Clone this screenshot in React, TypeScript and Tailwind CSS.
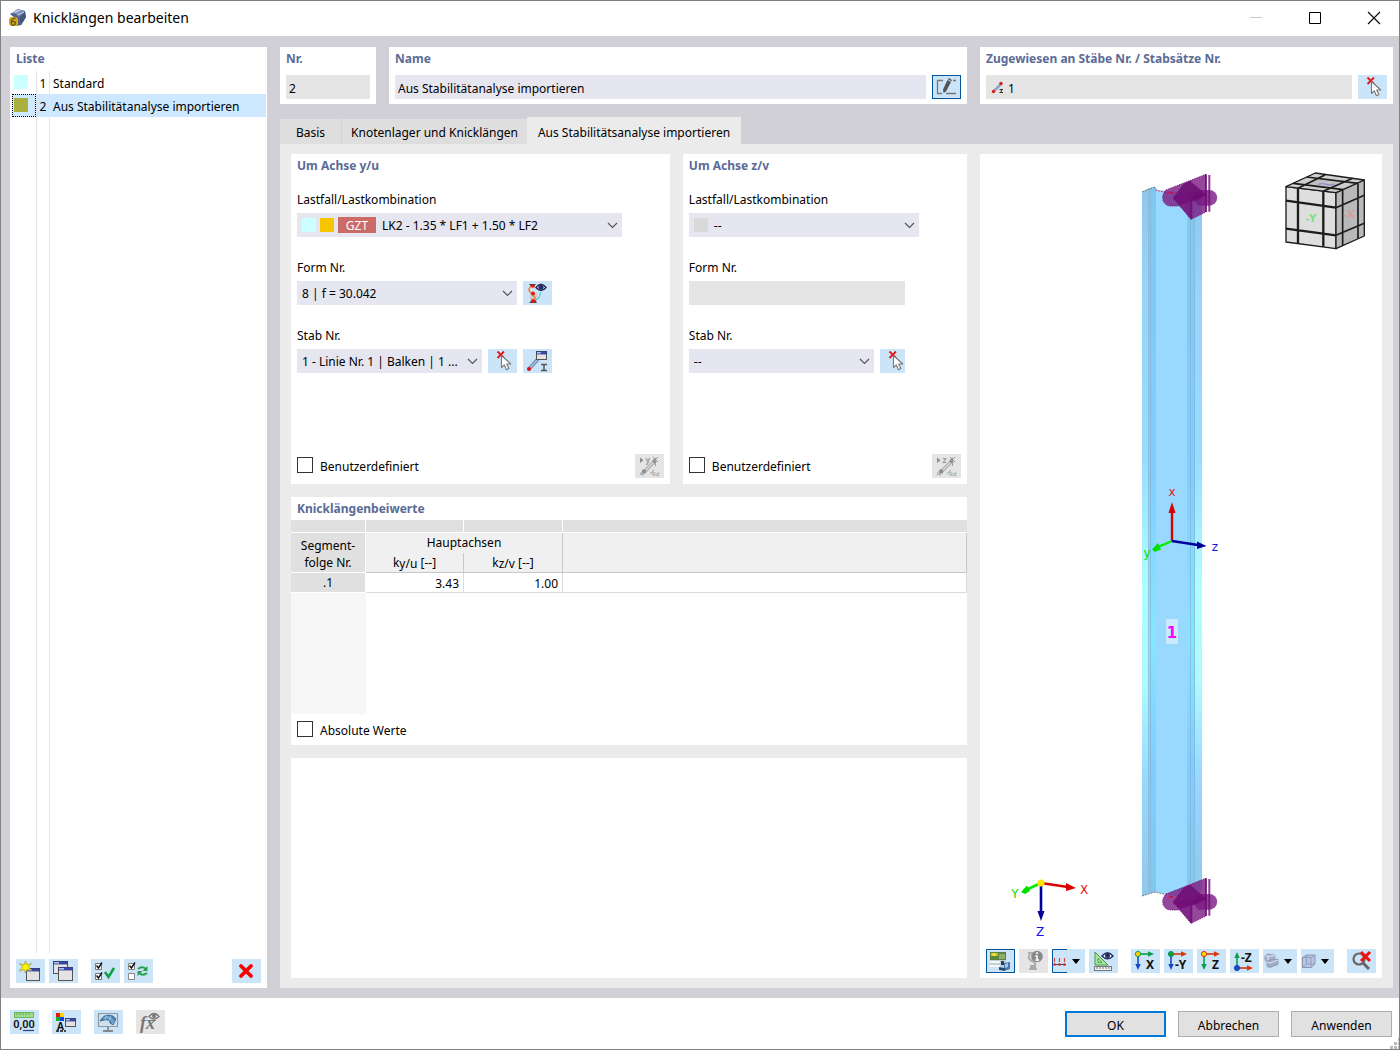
import type { ReactNode } from "react";

const HEADING = "text-[12px] leading-4 font-bold text-[#5a6b96]";

function Icon({ children, w = 29 }: { children: ReactNode; w?: number }) {
  return (
    <svg width={w} height={24} viewBox={`0 0 ${w} 24`} aria-hidden="true" className="block shrink-0">
      {children}
    </svg>
  );
}

function IconButton({
  label,
  children,
  className = "w-[29px] bg-[#cce4f7]",
  disabled = false,
}: {
  label: string;
  children: ReactNode;
  className?: string;
  disabled?: boolean;
}) {
  return (
    <button
      type="button"
      aria-label={label}
      title={label}
      disabled={disabled}
      className={`flex h-6 shrink-0 items-center justify-start overflow-hidden ${className}`}
    >
      {children}
    </button>
  );
}

const DISABLED_BTN = "w-[29px] bg-[#e5e5e5]";
const ACTIVE_BTN = "w-[29px] bg-[#cce4f7] outline outline-1 -outline-offset-1 outline-[#005499]";

function MiniWindow({ x, y, w, h }: { x: number; y: number; w: number; h: number }) {
  return (
    <g>
      <rect x={x + 0.5} y={y + 0.5} width={w - 1} height={h - 1} fill="#e3e3e6" stroke="#555" />
      <rect x={x + 0.5} y={y + 0.5} width={w - 1} height={2.5} fill="#3949b8" stroke="#34406f" strokeWidth="0.8" />
      <rect x={x + 1} y={y + 1} width={w / 3} height={1.6} fill="#a9c2ee" />
    </g>
  );
}

function PickIcon() {
  return (
    <Icon>
      <path d="M9.500 2.500l6.500 6.500M16 2.500L9.500 9" stroke="#e3161b" strokeWidth="1.800" />
      <path
        d="M13.500 6.500v12l2.800-2.600 2.200 4.800 2.400-1.100-2.200-4.600h4z"
        fill="#fff"
        stroke="#777"
        strokeWidth="1.100"
        strokeLinejoin="round"
      />
    </Icon>
  );
}

function MemberImportIcon({ axis }: { axis: string }) {
  return (
    <Icon>
      <path d="M5 3.500v5.500l3.500-2.800z" fill="#8d8d8d" />
      <text x="10.500" y="9" fontSize="8" fontWeight="bold" fill="#999">{axis}</text>
      <path d="M9 18L20 7" stroke="#a9a9a9" strokeWidth="3.500" />
      <path d="M9 18L20 7" stroke="#d9d9d9" strokeWidth="1.500" />
      <circle cx="9" cy="17.500" r="2.200" fill="#8d8d8d" />
      <circle cx="19.500" cy="7" r="2" fill="#8d8d8d" />
      <path d="M5 21.500l4-4M5 18.500l4 3M18 3l5 5M23 3l-4 4M15 20l4-4M20.500 4v8" stroke="#999" strokeWidth="1" />
      <text x="17" y="22" fontSize="6" fill="#999">Rd</text>
    </Icon>
  );
}

type Dir = { v: string; h: string; o: string; t: string; up?: boolean };

function AxisIcon({ v, h, o, t, up }: Dir) {
  const y = up ? 19 : 5;
  return (
    <Icon>
      <path d={`M7 ${y}H18`} stroke={h} strokeWidth="1.600" />
      <path d={`M17 ${y - 2.7}L23 ${y}L17 ${y + 2.7}z`} fill={h} />
      <path d={up ? "M7 19V8" : "M7 5V16"} stroke={v} strokeWidth="1.600" />
      <path d={up ? "M4.300 9L7 3L9.700 9z" : "M4.300 15L7 21L9.700 15z"} fill={v} />
      <circle cx="7" cy={y} r="2.600" fill={o} stroke={o === "#ffd400" ? h : o} strokeWidth="1" />
      <text x={t.length > 1 ? 11 : 15} y={up ? 13 : 20} fontSize="12" fontWeight="bold" fill="#111">
        {t}
      </text>
    </Icon>
  );
}

function Select({
  id,
  value,
  className,
  children,
}: {
  id: string;
  value: string;
  className: string;
  children?: ReactNode;
}) {
  const pads: Record<string, string> = { lf1: "pl-[85px]", lf2: "pl-[25px]" };
  return (
    <div className={`relative h-6 ${className}`}>
      <select
        id={id}
        className={`h-6 w-full appearance-none truncate bg-[#e6e6f1] pt-0.5 pr-5 text-[12px] text-black outline-none ${pads[id] ?? "pl-[5px]"}`}
      >
        <option>{value}</option>
      </select>
      {children}
      <svg width="11" height="7" viewBox="0 0 11 7" className="pointer-events-none absolute top-[9px] right-1" aria-hidden="true">
        <path d="M1 1l4.500 4.500L10 1" fill="none" stroke="#555" strokeWidth="1.200" />
      </svg>
    </div>
  );
}

function Field({ id, label, children }: { id: string; label: string; children: ReactNode }) {
  return (
    <div className="flex flex-col gap-[5px]">
      <label htmlFor={id} className="self-start leading-4">
        {label}
      </label>
      <div className="flex gap-1.5">{children}</div>
    </div>
  );
}

function Check({ label }: { label: string }) {
  return (
    <label className="flex items-start gap-[7px] leading-[19px]">
      <input type="checkbox" className="h-4 w-4 appearance-none border border-[#333] bg-white checked:bg-[#333]" />
      {label}
    </label>
  );
}

function ListRow({ color, nr, text, selected }: { color: string; nr: string; text: string; selected?: boolean }) {
  return (
    <li className="flex h-[23px]">
      <span
        className={`flex w-6 items-start border pt-[3px] pl-px ${selected ? "border-dotted border-black bg-[#cde8ff]" : "border-transparent"}`}
      >
        <span className={`h-3.5 w-3.5 ${color}`} />
      </span>
      <button type="button" className={`flex flex-1 items-stretch text-left ${selected ? "bg-[#cde8ff]" : ""}`}>
        <span className="flex w-3.5 items-center justify-center border-x border-[#e5e5e5] pt-0.5">{nr}</span>
        <span className="flex items-center pt-0.5 pl-[3px]">{text}</span>
      </button>
    </li>
  );
}

function Support() {
  return (
    <g>
      <path
        d="M108 90L228 43V156L183 178L150 138H122A24 24 0 0 1 98 115Q98 100 108 90z"
        fill="#7a1a82"
        fillOpacity=".8"
        stroke="#7a1a82"
        strokeWidth="3"
        strokeDasharray="4 3"
      />
      <path d="M205 90H238A23 23 0 0 1 238 137H205L185 112z" fill="#7a1a82" fillOpacity=".8" />
      <path d="M128 115L160 72L180 62L230 105L200 120L150 135z" fill="#6a0a70" fillOpacity=".8" />
      <path d="M128 115L183 178V100z" fill="#740f7a" fillOpacity=".6" />
      <path d="M184 110V178M228 43V156M238 45V155" stroke="#6d0d74" strokeWidth="6" strokeOpacity=".8" />
      <path d="M116 97l14 2" stroke="#d01040" strokeWidth="5" />
    </g>
  );
}

function Scene() {
  return (
    <svg
      viewBox="980 154 402 795"
      className="min-h-0 w-full flex-1"
      role="img"
      aria-label="Stab 1"
      preserveAspectRatio="xMidYMid meet"
    >
      <defs>
        <linearGradient id="flange" x1="0" y1="0" x2="0" y2="1">
          <stop offset="0" stopColor="#8fc8ec" />
          <stop offset=".15" stopColor="#98d4fc" />
          <stop offset=".38" stopColor="#99dbff" />
          <stop offset=".56" stopColor="#adfdff" />
          <stop offset=".7" stopColor="#adfaff" />
          <stop offset=".84" stopColor="#99d7ff" />
          <stop offset="1" stopColor="#8fc8ec" />
        </linearGradient>
        <linearGradient id="inner" x1="0" y1="0" x2="0" y2="1">
          <stop offset="0" stopColor="#80c8ee" />
          <stop offset=".4" stopColor="#80cdff" />
          <stop offset=".64" stopColor="#86e6ff" />
          <stop offset=".82" stopColor="#80cdff" />
          <stop offset="1" stopColor="#80c8ee" />
        </linearGradient>
      </defs>
      <path d="M1142 192L1155 187L1158 190L1202 194V892L1180 897L1155 892L1142 896z" fill="#99d9ff" />
      <path d="M1142 192L1149 188V893L1142 896z" fill="url(#flange)" />
      <path d="M1149 188L1156 187V892L1149 893z" fill="url(#inner)" />
      <path d="M1187 192H1195V890H1187z" fill="url(#inner)" />
      <path d="M1195 192H1202V890H1195z" fill="url(#flange)" />
      <path d="M1148.500 190V893M1150.500 189V893M1190.500 192V890M1194.500 192V890" stroke="#84b5d6" strokeWidth="1" strokeOpacity=".7" />
      <path d="M1142 192L1155 187M1142 896L1155 892L1168 895" stroke="#777" strokeWidth="1" strokeDasharray="2 1" fill="none" />
      <path d="M1155 190L1168 193" stroke="#e04050" strokeWidth="1" strokeDasharray="2 1" />
      <g transform="translate(1130 160) scale(.3333)">
        <Support />
      </g>
      <g transform="translate(1130 864) scale(.3333)">
        <Support />
      </g>

      <g strokeWidth="2.400">
        <path d="M1172 541V512" stroke="#d80000" />
        <path d="M1168.500 513L1172 502L1175.500 513z" fill="#d80000" />
        <path d="M1172 541L1158 547" stroke="#00ee00" />
        <path d="M1152 549.500L1158 543L1161 549.500L1155 552z" fill="#00e000" />
        <path d="M1172 541L1198 545" stroke="#00009b" />
        <path d="M1197 541.500L1206.500 546L1197 549z" fill="#00009b" />
      </g>
      <g fontSize="12" textAnchor="middle" fontFamily="DejaVu Sans">
        <text x="1172" y="496" fill="#e02020">x</text>
        <text x="1147" y="557" fill="#00e000">y</text>
        <text x="1215" y="551" fill="#1010e0">z</text>
      </g>
      <rect x="1166" y="619" width="12" height="25" fill="#c9e9fc" />
      <text x="1172" y="638" fontSize="15" fontWeight="bold" fill="#f0f" textAnchor="middle" fontFamily="DejaVu Sans">1</text>

      <g strokeWidth="2.600">
        <path d="M1041 883L1068 887" stroke="#d80000" />
        <path d="M1066 883L1076 888L1066 891z" fill="#d80000" />
        <path d="M1041 883L1028 889" stroke="#00ee00" />
        <path d="M1021 892L1027 885.500L1030 891L1025 894z" fill="#00e000" />
        <path d="M1041 883V912" stroke="#00009b" />
        <path d="M1037.500 911L1041 921L1044.500 911z" fill="#00009b" />
        <circle cx="1041" cy="883" r="3.600" fill="#ffe600" />
      </g>
      <g fontSize="12" textAnchor="middle" fontFamily="DejaVu Sans">
        <text x="1084" y="894" fill="#e81010">X</text>
        <text x="1015" y="898" fill="#00e000">Y</text>
        <text x="1040" y="936" fill="#1010e8">Z</text>
      </g>

      <g transform="translate(1130 160) scale(.3333)" stroke="#1c1c1c" strokeWidth="4" strokeLinejoin="round">
        <path d="M468 80L618 98V266L468 246z" fill="#dedede" />
        <path d="M618 98L703 60V228L618 266z" fill="#b9b9b9" />
        <path d="M468 80L556 39L703 60L618 98z" fill="#cfcfcf" />
        <path d="M530 73L568 54L650 64L602 84z" fill="#bfbfc4" stroke="none" />
        <g fill="none" strokeWidth="7">
          <path d="M504 85V250M580 94V260M468 122L618 143M468 206L618 226" />
          <path d="M638 90V258M684 70V236M618 143L703 106M618 226L703 190" strokeWidth="5" />
          <path d="M504 85L586 44M580 94L668 55M490 70L640 89M530 51L684 70" strokeWidth="5" />
        </g>
        <path d="M565 73q14-4 24 0t24-1" fill="none" stroke="#8e8ecb" strokeWidth="4" />
      </g>
      <g fontSize="11" fontWeight="bold" textAnchor="middle" fontFamily="Noto Sans">
        <text x="1311" y="222" fill="#80dd80">-Y</text>
        <text x="1349" y="218" fill="#d99a9a">-X</text>
      </g>
    </svg>
  );
}

function Triangle({ x }: { x: number }) {
  return <path d={`M${x} 10h8l-4 5z`} fill="#000" />;
}

function ViewerToolbar() {
  return (
    <div className="flex gap-1 px-1.5 pb-[5px]">
      <IconButton label="Ansicht" className={ACTIVE_BTN}>
        <Icon>
          <rect x="4" y="3" width="16" height="15" fill="#c3d0d8" />
          <rect x="4" y="3" width="16" height="8" fill="#5c8440" />
          <path d="M13 5h6v5h-6z" fill="#8fb06a" />
          <rect x="5" y="4" width="7" height="3" fill="#b8c92e" />
          <circle cx="8" cy="5.500" r="1.800" fill="#f5e034" />
          <path d="M4 12h10v2H4zM4 16h10v2H4z" fill="#f4f6f7" />
          <path d="M15 12h3v4h-3z" fill="#2d4256" />
          <path d="M18 14l6-1v7l-6 2z" fill="#4776ac" />
          <path d="M19 15l3-1v4l-3 1z" fill="#a6c4e4" />
          <path d="M13 18l6 1v3l-6-1z" fill="#27486f" />
        </Icon>
      </IconButton>
      <IconButton label="Information" className={DISABLED_BTN} disabled>
        <Icon>
          <path d="M9 4h8v3l-3 2M11 5q-3 5 2 7t2 6M10 20h8" fill="none" stroke="#b0b0b0" strokeWidth="2.200" />
          <rect x="11" y="16" width="6" height="5" fill="#aaa" />
          <circle cx="18" cy="7.500" r="5.800" fill="#8a8a8a" />
          <path d="M18 6.500v5M16.500 7h1.500M16.500 11h3.500" stroke="#eee" strokeWidth="1.800" />
          <circle cx="18" cy="4.200" r="1.100" fill="#eee" />
        </Icon>
      </IconButton>
      <IconButton label="Nummerierung" className="w-[33px] bg-[#cce4f7]">
        <Icon w={33}>
          <path d="M15 .500H.500v23H15" fill="none" stroke="#005499" />
          <path d="M2 15.500h12" stroke="#446" />
          <path d="M2.500 9v4M7.500 9v4M12.500 9v4" stroke="#e24040" strokeWidth="1.200" />
          <path d="M1.500 15.500h2M6.500 15.500h2M11.500 15.500h2" stroke="#e02020" strokeWidth="2.500" />
          <Triangle x={20} />
        </Icon>
      </IconButton>
      <IconButton label="Maße anzeigen">
        <Icon>
          <path d="M6 3v13h13z" fill="#a8e4a0" stroke="#4a9a4a" />
          <path d="M9 9.500v3.800h4z" fill="#e5f6e5" stroke="#4a9a4a" />
          <rect x="5.500" y="17.500" width="17" height="4" fill="#f3f3f3" stroke="#777" />
          <path d="M8 18v2M11 18v2M14 18v2M17 18v2M20 18v2" stroke="#777" />
          <path d="M13 7q5.500-6.500 11 0q-5.500 5.500-11 0z" fill="#fff" stroke="#222d66" strokeWidth="1.500" />
          <circle cx="18.500" cy="6.500" r="2.500" fill="#222d66" />
        </Icon>
      </IconButton>
      <IconButton label="Ansicht X" className="ml-[9px] w-[29px] bg-[#cce4f7]">
        <AxisIcon v="#1748c8" h="#0e9c4a" o="#ffd400" t="X" />
      </IconButton>
      <IconButton label="Ansicht -Y">
        <AxisIcon v="#1748c8" h="#d8380c" o="#0e9c4a" t="-Y" />
      </IconButton>
      <IconButton label="Ansicht Z">
        <AxisIcon v="#0e9c4a" h="#d8380c" o="#ffd400" t="Z" />
      </IconButton>
      <IconButton label="Ansicht -Z">
        <AxisIcon v="#0e9c4a" h="#d8380c" o="#1748c8" t="-Z" up />
      </IconButton>
      <IconButton label="Darstellung" className="w-[34px] bg-[#cce4f7]">
        <Icon w={34}>
          <path d="M2 6.500l3-1.500 7 1-1 6-6 1-3-1.500z" fill="#a9b5cd" stroke="#8795b3" strokeWidth=".8" />
          <path d="M4 13l3-2 8-1v5.500l-8 3-3-1z" fill="#a0adc8" stroke="#8795b3" strokeWidth=".8" />
          <path d="M2 6.500l3 1 7-1.500M5 7.500V11M4 13l3 1 8-3" fill="none" stroke="#dfe7f4" />
          <Triangle x={21} />
        </Icon>
      </IconButton>
      <IconButton label="Körper" className="w-[33px] bg-[#cce4f7]">
        <Icon w={33}>
          <path d="M1.500 8.500l4-2.500h8.500v9l-4 3.500H1.500z" fill="#b9c5df" stroke="#8a97b8" />
          <path d="M1.500 8.500H10v10M10 8.500L14 6M5.500 6v9l-4 3.500M5.500 15H14" fill="none" stroke="#8a97b8" strokeWidth=".8" />
          <Triangle x={20} />
        </Icon>
      </IconButton>
      <IconButton label="Zoom zurücksetzen" className="ml-[9px] w-[29px] bg-[#cce4f7]">
        <Icon>
          <circle cx="12" cy="10" r="5.500" fill="none" stroke="#666" strokeWidth="2.200" />
          <path d="M16 14l6 6" stroke="#666" strokeWidth="3" />
          <path d="M14 3l9 9M23 3l-9 9" stroke="#f01010" strokeWidth="3" />
        </Icon>
      </IconButton>
    </div>
  );
}

export default function App() {
  return (
    <div className="flex min-h-screen flex-col border border-[#808080] bg-white font-['Noto_Sans',sans-serif] text-[12px] text-black">
      <header className="flex h-[35px] shrink-0 items-center pr-[18px] pb-0.5 pl-1.5">
        <svg width="20" height="20" viewBox="0 0 20 20" aria-hidden="true">
          <path d="M3 6L11 1L18 3L19 9L14 17L10 18L8 10z" fill="#4f648c" />
          <path d="M3 6Q8 3 12 9L14 17L19 9Q18 2 11 1z" fill="#7188b4" />
          <path d="M5 5l7-3M8 5l6-3M10 7l7-3M12 10l7-4" stroke="#c5d1e8" strokeWidth="1" />
          <path d="M12 9l2 8 5-8-1-5z" fill="#44557c" />
          <rect x="2" y="9" width="9" height="9" rx="3" fill="#d4a81c" />
          <path d="M8.500 10.500Q4 10 4.300 14.500T8 16.500Q9.500 13 5 13.500" fill="none" stroke="#6d5410" strokeWidth="1.300" />
        </svg>
        <h1 className="ml-1.5 flex-1 text-[14px] leading-5">Knicklängen bearbeiten</h1>
        <div className="flex gap-[45px]">
          <button type="button" aria-label="Minimieren" className="flex h-4 w-3.5 items-center">
            <svg width="14" height="14" aria-hidden="true"><path d="M1 6.500h12" stroke="#c8c8c8" /></svg>
          </button>
          <button type="button" aria-label="Maximieren" className="flex h-4 w-3.5 items-center">
            <svg width="14" height="14" aria-hidden="true"><path d="M1.500 1.500h11v11h-11z" fill="none" stroke="#000" /></svg>
          </button>
          <button type="button" aria-label="Schließen" className="flex h-4 w-3.5 items-center">
            <svg width="14" height="14" aria-hidden="true"><path d="M1 1l12 12M13 1L1 13" stroke="#000" strokeWidth="1.100" /></svg>
          </button>
        </div>
      </header>

      <main className="flex flex-1 gap-[13px] bg-[#d1d0d6] pt-[11px] pr-1.5 pb-[10px] pl-[9px]">
        <aside className="flex w-[257px] shrink-0 flex-col bg-white">
          <h2 className={`${HEADING} px-1.5 pt-1`}>Liste</h2>
          <ul className="mt-1 flex flex-1 flex-col pr-px pl-0.5">
            <ListRow color="bg-[#ccffff]" nr="1" text="Standard" />
            <ListRow color="bg-[#aaaf3e]" nr="2" text="Aus Stabilitätanalyse importieren" selected />
            <li className="ml-6 w-3.5 flex-1 border-x border-[#e5e5e5]" aria-hidden="true" />
          </ul>
          <div className="mt-1.5 flex gap-1 px-1.5 pb-[5px]">
            <IconButton label="Neu">
              <Icon>
                <MiniWindow x={10} y={9} w={14} h={13} />
                <path d="M9.500 2l1.500 4 4.500-1.500-3 3.500 3 3-4.500-.500L9.500 14 8 10.500 3.500 12 6.500 8 3.500 4.500 8 6z" fill="#fff200" stroke="#8a8a30" strokeWidth=".6" />
              </Icon>
            </IconButton>
            <IconButton label="Kopieren">
              <Icon>
                <MiniWindow x={4} y={2} w={15} h={13} />
                <MiniWindow x={9} y={8} w={15} h={14} />
              </Icon>
            </IconButton>
            <IconButton label="Alle auswählen" className="ml-[9px] w-[29px] bg-[#cce4f7]">
              <Icon>
                <path d="M4.500 4.500h6v6h-6zM4.500 14.500h6v6h-6z" fill="#fff" stroke="#777" />
                <path d="M5.500 6.500l2 2.500L11 3.500M5.500 16.500l2 2.500 3.500-5.500" fill="none" stroke="#111" strokeWidth="1.400" />
                <path d="M14 13l3.500 5L23 9" fill="none" stroke="#12a044" strokeWidth="2.600" />
              </Icon>
            </IconButton>
            <IconButton label="Auswahl umkehren">
              <Icon>
                <path d="M4.500 4.500h6v6h-6zM4.500 14.500h6v6h-6z" fill="#fff" stroke="#888" />
                <path d="M5.500 6.500l2 2.500L11 3.500" fill="none" stroke="#111" strokeWidth="1.400" />
                <path d="M14 10q4-3.500 8 0M23 14q-4 3.500-8 0" fill="none" stroke="#28a04c" strokeWidth="2" />
                <path d="M23.500 7v5h-5zM13.500 17v-5h5z" fill="#28a04c" />
              </Icon>
            </IconButton>
            <IconButton label="Löschen" className="ml-auto w-[29px] bg-[#cce4f7]">
              <Icon>
                <path d="M9 7l10 10M19 7L9 17" stroke="#fb0000" strokeWidth="3.800" strokeLinecap="round" />
              </Icon>
            </IconButton>
          </div>
        </aside>

        <div className="flex min-w-0 flex-1 flex-col">
          <div className="flex gap-[13px]">
            <section className="w-24 bg-white px-1.5 pt-1 pb-[5px]">
              <label htmlFor="nr" className={`${HEADING} block`}>Nr.</label>
              <input id="nr" readOnly defaultValue="2" className="mt-2 block h-6 w-full bg-[#e5e5e5] px-[3px] pt-0.5 outline-none" />
            </section>
            <section className="min-w-0 flex-1 bg-white px-1.5 pt-1 pb-[5px]">
              <label htmlFor="name" className={`${HEADING} block`}>Name</label>
              <div className="mt-2 flex gap-1.5">
                <input
                  id="name"
                  defaultValue="Aus Stabilitätanalyse importieren"
                  className="h-6 min-w-0 flex-1 bg-[#e6e6f1] px-[3px] pt-0.5 outline-none"
                />
                <IconButton label="Name bearbeiten" className={ACTIVE_BTN}>
                  <Icon>
                    <path d="M11 5.500H5.500v13H10M14 18.500h10M21 5.500h3" fill="none" stroke="#777" strokeWidth="1.300" />
                    <path d="M15.500 5l3.500 2-5 9.500-2.500 1.500-.500-3.500z" fill="#555" />
                    <path d="M16.500 3l3.500 2-.600 1.200-3.500-2z" fill="#555" />
                  </Icon>
                </IconButton>
              </div>
            </section>
            <section className="w-[413px] bg-white px-1.5 pt-1 pb-[5px]">
              <label htmlFor="assigned" className={`${HEADING} block`}>Zugewiesen an Stäbe Nr. / Stabsätze Nr.</label>
              <div className="mt-2 flex gap-1.5">
                <div className="flex h-6 min-w-0 flex-1 items-center bg-[#e5e5e5] pl-[5px]">
                  <svg width="14" height="14" viewBox="0 0 14 14" aria-hidden="true">
                    <path d="M3 11L10 4" stroke="#8fa3c4" strokeWidth="2.500" />
                    <circle cx="2.500" cy="11.500" r="1.700" fill="#d81c1c" />
                    <circle cx="10" cy="3.500" r="1.700" fill="#d81c1c" />
                    <path d="M8.500 9.500h3.500M8.500 12.500h3.500M10.250 9.500v3" stroke="#333" />
                  </svg>
                  <input id="assigned" readOnly defaultValue="1" className="h-6 min-w-0 flex-1 bg-transparent pt-0.5 pl-[3px] outline-none" />
                </div>
                <IconButton label="Auswählen"><PickIcon /></IconButton>
              </div>
            </section>
          </div>

          <div role="tablist" className="mt-[13px] flex items-end">
            <button type="button" role="tab" aria-selected="false" className="h-[25px] w-[62px] border-r border-[#d1d0d6] bg-[#dedede] pt-0.5">Basis</button>
            <button type="button" role="tab" aria-selected="false" className="h-[25px] w-[185px] bg-[#dedede] pt-0.5 whitespace-nowrap">Knotenlager und Knicklängen</button>
            <button type="button" role="tab" aria-selected="true" className="h-[27px] w-[214px] bg-[#ebebeb] pt-1 whitespace-nowrap">Aus Stabilitätsanalyse importieren</button>
          </div>

          <div role="tabpanel" className="flex flex-1 gap-[13px] bg-[#ebebeb] px-[11px] py-[10px]">
            <div className="flex min-w-0 flex-1 flex-col gap-[13px]">
              <div className="grid grid-cols-[4fr_3fr] gap-[13px]">
                <section className="flex min-h-[330px] flex-col bg-white px-1.5 pt-1 pb-1.5">
                  <h2 className={HEADING}>Um Achse y/u</h2>
                  <div className="mt-[18px] flex flex-col gap-[23px]">
                    <Field id="lf1" label="Lastfall/Lastkombination">
                      <Select id="lf1" value="LK2 - 1.35 * LF1 + 1.50 * LF2" className="w-[325px]">
                        <div className="pointer-events-none absolute top-1 left-[5px] flex h-4 items-center gap-1">
                          <span className="h-3.5 w-3.5 bg-[#ccffff]" />
                          <span className="h-3.5 w-3.5 bg-[#f7c600]" />
                          <span className="flex h-4 w-[38px] items-center justify-center bg-[#cb6b68] pt-0.5 text-white">GZT</span>
                        </div>
                      </Select>
                    </Field>
                    <Field id="form1" label="Form Nr.">
                      <Select id="form1" value="8 | f = 30.042" className="w-[220px]" />
                      <IconButton label="Eigenform anzeigen">
                        <Icon>
                          <path d="M7 12h7v10H7z" fill="#c6ccd4" />
                          <path d="M10 4Q3 8 8 12T12 20" fill="none" stroke="#ff7a2f" strokeWidth="1.600" />
                          <path d="M17 11q1 5-4 8" fill="none" stroke="#53cfcf" strokeWidth="1.300" />
                          <path d="M6 3h7l-2.500 3h-2zM6 22l3-3h3l2 3z" fill="#444" />
                          <circle cx="10" cy="5" r="1.800" fill="#e61414" />
                          <circle cx="10" cy="12.500" r="1.900" fill="#e61414" />
                          <circle cx="10" cy="20" r="1.900" fill="#e61414" />
                          <path d="M13 6.500q5-6.500 10 0q-5 6-10 0z" fill="#fff" stroke="#222d55" strokeWidth="1.500" />
                          <circle cx="18" cy="6.300" r="2.600" fill="#222d66" />
                        </Icon>
                      </IconButton>
                    </Field>
                    <Field id="stab1" label="Stab Nr.">
                      <Select id="stab1" value="1 - Linie Nr. 1 | Balken | 1 ..." className="w-[185px]" />
                      <IconButton label="Stab auswählen"><PickIcon /></IconButton>
                      <IconButton label="Stab bearbeiten">
                        <Icon>
                          <path d="M6 20L15 10" stroke="#6c86ad" strokeWidth="3.500" />
                          <path d="M6 20L15 10" stroke="#a9c0de" strokeWidth="1.500" />
                          <circle cx="6" cy="20" r="2" fill="#e01010" />
                          <MiniWindow x={13} y={2} w={11} h={9} />
                          <path d="M18 15.500h6M18 21.500h6M21 15.500v6" stroke="#555" strokeWidth="1.500" />
                        </Icon>
                      </IconButton>
                    </Field>
                  </div>
                  <div className="mt-auto flex h-6 items-center justify-between">
                    <Check label="Benutzerdefiniert" />
                    <IconButton label="Import y" className={DISABLED_BTN} disabled><MemberImportIcon axis="y" /></IconButton>
                  </div>
                </section>
                <section className="flex min-h-[330px] flex-col bg-white px-1.5 pt-1 pb-1.5">
                  <h2 className={HEADING}>Um Achse z/v</h2>
                  <div className="mt-[18px] flex flex-col gap-[23px]">
                    <Field id="lf2" label="Lastfall/Lastkombination">
                      <Select id="lf2" value="--" className="w-[230px]">
                        <span className="pointer-events-none absolute top-[5px] left-[5px] h-3.5 w-3.5 bg-[#d9d9d9]" />
                      </Select>
                    </Field>
                    <Field id="form2" label="Form Nr.">
                      <input id="form2" disabled className="h-6 w-[216px] bg-[#e5e5e5]" />
                    </Field>
                    <Field id="stab2" label="Stab Nr.">
                      <Select id="stab2" value="--" className="w-[185px]" />
                      <IconButton label="Stab auswählen" className="w-[25px] bg-[#cce4f7]"><PickIcon /></IconButton>
                    </Field>
                  </div>
                  <div className="mt-auto flex h-6 items-center justify-between">
                    <Check label="Benutzerdefiniert" />
                    <IconButton label="Import z" className={DISABLED_BTN} disabled><MemberImportIcon axis="z" /></IconButton>
                  </div>
                </section>
              </div>

              <section className="flex min-h-[248px] flex-col bg-white pt-1 pb-[5px]">
                <h2 className={`${HEADING} px-1.5`}>Knicklängenbeiwerte</h2>
                <div className="mt-[3px] flex flex-1 flex-col">
                  <table className="w-full table-fixed border-separate border-spacing-0">
                    <colgroup>
                      <col className="w-[75px]" />
                      <col className="w-[98px]" />
                      <col className="w-[99px]" />
                      <col />
                    </colgroup>
                    <thead className="font-normal">
                      <tr className="h-[13px]">
                        <td className="border-r border-b border-white bg-[#e0e0e0]" />
                        <td className="border-r border-b border-white bg-[#e0e0e0]" />
                        <td className="border-r border-b border-white bg-[#e0e0e0]" />
                        <td className="border-b border-white bg-[#e0e0e0]" />
                      </tr>
                      <tr className="h-5">
                        <th rowSpan={2} className="border-r border-b border-white bg-[#e0e0e0] p-0 pt-0.5 leading-[17px] font-normal">
                          Segment-<br />folge Nr.
                        </th>
                        <th colSpan={2} className="border-r border-[#c8c8c8] bg-[#f0f0f0] p-0 leading-4 font-normal">Hauptachsen</th>
                        <th rowSpan={2} aria-label="Leer" className="border-r border-b border-[#c8c8c8] bg-[#f0f0f0] p-0" />
                      </tr>
                      <tr className="h-5">
                        <th className="border-r border-b border-[#c8c8c8] bg-[#f0f0f0] p-0 leading-4 font-normal">
                          k<span className="relative top-px">y/u</span> [--]
                        </th>
                        <th className="border-r border-b border-[#c8c8c8] bg-[#f0f0f0] p-0 leading-4 font-normal">
                          k<span className="relative top-px">z/v</span> [--]
                        </th>
                      </tr>
                    </thead>
                    <tbody>
                      <tr className="h-5">
                        <th className="border-r border-b border-white bg-[#e0e0e0] p-0 leading-4 font-normal">.1</th>
                        <td className="border-r border-b border-[#dcdcdc] p-0 pt-0.5 pr-1 text-right leading-4">3.43</td>
                        <td className="border-r border-b border-[#dcdcdc] p-0 pt-0.5 pr-1 text-right leading-4">1.00</td>
                        <td className="border-r border-b border-[#dcdcdc] p-0" />
                      </tr>
                    </tbody>
                  </table>
                  <div className="w-[75px] flex-1 bg-[#f7f7f7]" />
                </div>
                <div className="mt-[7px] px-1.5">
                  <Check label="Absolute Werte" />
                </div>
              </section>

              <section className="flex-1 bg-white" aria-label="Kommentar" />
            </div>

            <section className="flex w-[402px] shrink-0 flex-col bg-white" aria-label="Vorschau">
              <Scene />
              <ViewerToolbar />
            </section>
          </div>
        </div>
      </main>

      <footer className="relative flex h-[51px] shrink-0 items-start justify-between pr-[7px] pl-[9px]">
        <div className="mt-3 flex gap-[13px]">
          <IconButton label="Einheiten">
            <Icon>
              <rect x="4.500" y="2.500" width="19" height="5" fill="#9fdd8c" stroke="#6cb65c" />
              <path d="M7 3v2M10 3v2M13 3v2M16 3v2M19 3v2" stroke="#5da34e" />
              <text x="14" y="18" fontSize="11" fontWeight="600" fill="#111" textAnchor="middle" fontFamily="Roboto">0,00</text>
              <path d="M13 20.500h11" stroke="#24408f" strokeWidth="1.200" />
            </Icon>
          </IconButton>
          <IconButton label="Farben">
            <Icon>
              <path d="M4 3h4v4H4z" fill="#e81414" /><path d="M8 3h4v4H8z" fill="#ffd800" />
              <path d="M4 7h4v4H4z" fill="#15b02c" /><path d="M8 7h4v4H8z" fill="#1540e0" />
              <text x="8.500" y="20" fontSize="10" fontWeight="bold" fill="#111" textAnchor="middle">A</text>
              <path d="M4 21h10" stroke="#111" strokeDasharray="3 1" strokeWidth="1.500" />
              <MiniWindow x={13} y={8} w={11} h={9} />
            </Icon>
          </IconButton>
          <IconButton label="Anzeige">
            <Icon>
              <path d="M4.500 3.500h19v13h-19z" fill="#cfe0ec" stroke="#8e9aa3" strokeWidth="1.200" />
              <path d="M6 11Q9 5 14 5Q20 5 22 9L19 15L16 13Q15 9 11 10z" fill="#4a82b5" stroke="#2d5f8e" strokeWidth=".7" />
              <path d="M9 8q7-2 10 6M12 6q6 1 8 6M12 6l-1 4M17 6l-2 5" fill="none" stroke="#a8cdea" strokeWidth=".8" />
              <path d="M14 17v4M9 21h10" stroke="#888" strokeWidth="1.800" />
            </Icon>
          </IconButton>
          <IconButton label="Formel" className={DISABLED_BTN} disabled>
            <Icon>
              <text x="4" y="19" fontSize="18" fontStyle="italic" fontWeight="bold" fill="#777" fontFamily="Liberation Serif">fx</text>
              <path d="M13 6.500q5-6 10 0q-5 5-10 0z" fill="#e5e5e5" stroke="#777" strokeWidth="1.300" />
              <circle cx="18" cy="6" r="2" fill="#777" />
              <path d="M12 10.500h8" stroke="#777" />
            </Icon>
          </IconButton>
        </div>
        <div className="mt-[13px] flex gap-3">
          <button type="button" className="h-[26px] w-[101px] border-2 border-[#0078d7] bg-[#e1e1e1] pt-1">OK</button>
          <button type="button" className="h-[26px] w-[101px] border border-[#adadad] bg-[#e1e1e1] pt-1">Abbrechen</button>
          <button type="button" className="h-[26px] w-[101px] border border-[#adadad] bg-[#e1e1e1] pt-1">Anwenden</button>
        </div>
        <svg width="9" height="11" viewBox="0 0 9 11" className="absolute right-0 bottom-0" aria-hidden="true">
          <path d="M0 8h3v3H0zM4 8h3v3H4zM4 4h3v3H4zM8 8h1v3H8zM8 4h1v3H8zM8 0h1v3H8z" fill="#bbb" />
        </svg>
      </footer>
    </div>
  );
}
